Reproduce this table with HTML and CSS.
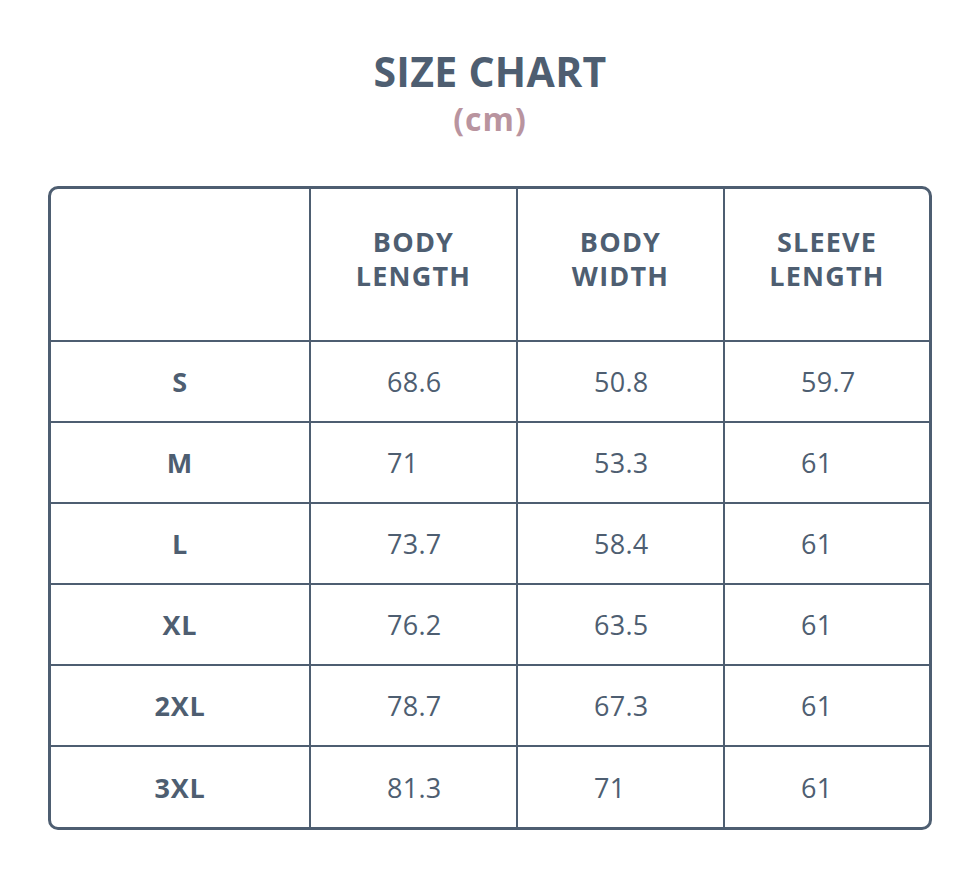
FILE: index.html
```html
<!DOCTYPE html>
<html>
<head>
<meta charset="utf-8">
<link rel="stylesheet" href="styles.css">
</head>
<body>
<div class="page">
  <header class="title">
    <h1>SIZE CHART</h1>
    <div class="unit">(cm)</div>
  </header>
  <div class="chart">
    <div class="cell head"></div>
    <div class="cell head"><span>BODY<br>LENGTH</span></div>
    <div class="cell head"><span>BODY<br>WIDTH</span></div>
    <div class="cell head last"><span>SLEEVE<br>LENGTH</span></div>

    <div class="cell size">S</div><div class="cell val">68.6</div><div class="cell val">50.8</div><div class="cell val last">59.7</div>
    <div class="cell size">M</div><div class="cell val">71</div><div class="cell val">53.3</div><div class="cell val last">61</div>
    <div class="cell size">L</div><div class="cell val">73.7</div><div class="cell val">58.4</div><div class="cell val last">61</div>
    <div class="cell size">XL</div><div class="cell val">76.2</div><div class="cell val">63.5</div><div class="cell val last">61</div>
    <div class="cell size">2XL</div><div class="cell val">78.7</div><div class="cell val">67.3</div><div class="cell val last">61</div>
    <div class="cell size bottom">3XL</div><div class="cell val bottom">81.3</div><div class="cell val bottom">71</div><div class="cell val last bottom">61</div>
  </div>
</div>
</body>
</html>
```
FILE: styles.css
```css
html, body {
  margin: 0;
  padding: 0;
  background: #ffffff;
}
body {
  font-family: "Open Sans", "Noto Sans", sans-serif;
  color: #4e5e71;
}
.page {
  width: 980px;
  height: 879px;
  padding-top: 43px;
  box-sizing: border-box;
}
.title {
  text-align: center;
}
.title h1 {
  margin: 0;
  font-size: 41px;
  line-height: 56px;
  font-weight: 700;
  letter-spacing: 0.3px;
  color: #4e5e71;
}
.unit {
  font-size: 32px;
  line-height: 40px;
  font-weight: 700;
  color: #b9949f;
  letter-spacing: 1px;
}
.chart {
  margin: 47px 0 0 48px;
  width: 884px;
  box-sizing: border-box;
  border: 3px solid #4e5e71;
  border-radius: 10px;
  overflow: hidden;
  display: grid;
  grid-template-columns: 260px 207px 207px 204px;
  grid-template-rows: 153px repeat(5, 81px) 80px;
}
.cell {
  border-right: 2px solid #4e5e71;
  border-bottom: 2px solid #4e5e71;
  display: flex;
  align-items: center;
  font-size: 27px;
}
.cell.last { border-right: none; }
.cell.bottom { border-bottom: none; }
.head {
  justify-content: center;
  text-align: center;
  font-weight: 700;
  font-size: 27px;
  line-height: 34px;
  letter-spacing: 1.2px;
}
.head span { margin-top: -12px; }
.size {
  justify-content: center;
  font-weight: 700;
  letter-spacing: 0.8px;
}
.val {
  padding-left: 76px;
  font-weight: 400;
  letter-spacing: 0.3px;
}
```
